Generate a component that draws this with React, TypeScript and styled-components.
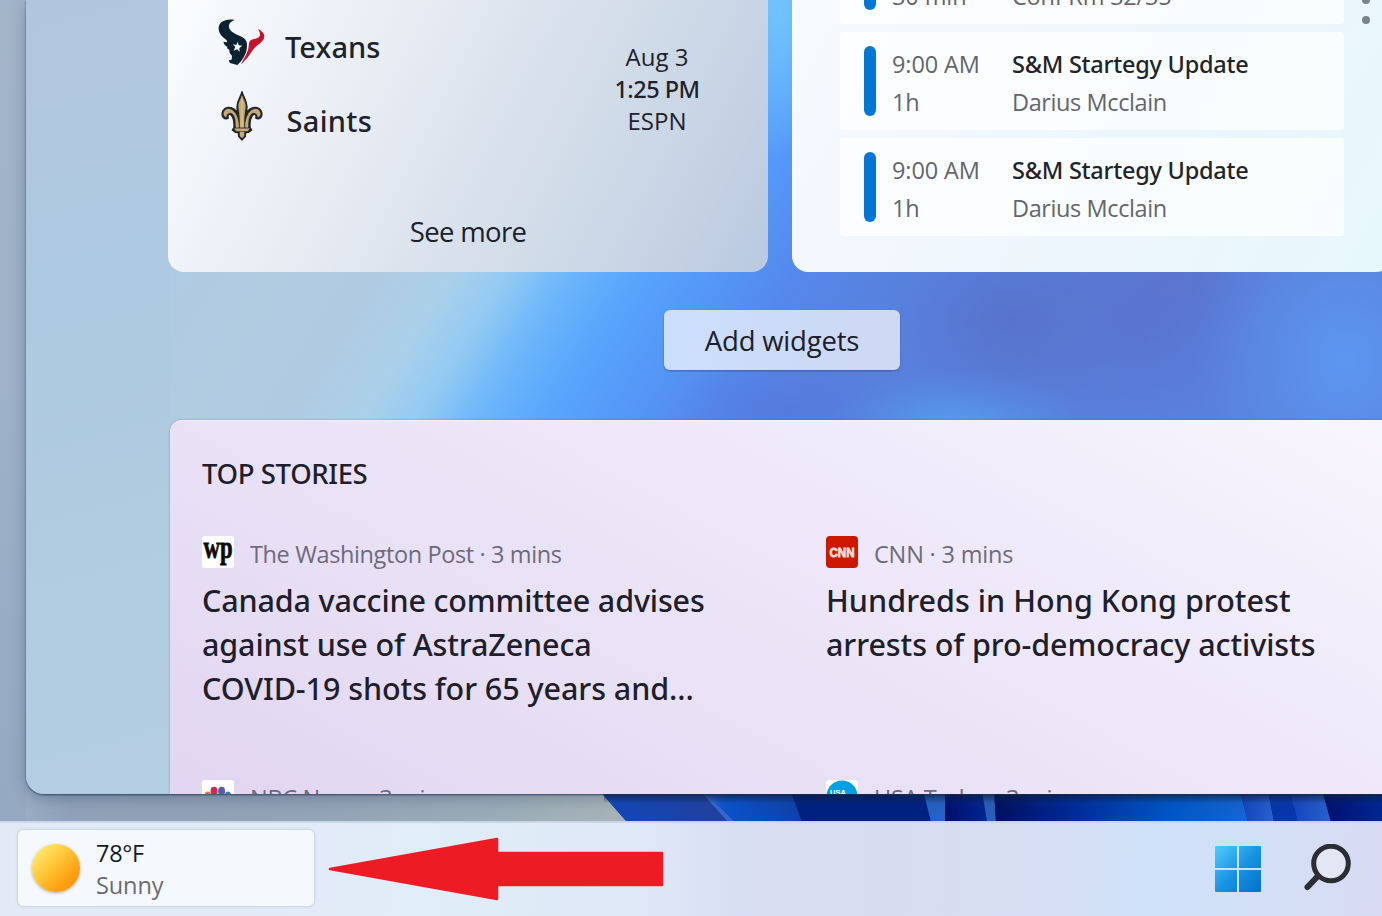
import React from 'react';
import styled, { createGlobalStyle, css } from 'styled-components';

const GlobalStyle = createGlobalStyle`
  *, *::before, *::after { box-sizing: border-box; }
  body { margin: 0; overflow: hidden; }
  p, h2, h3 { margin: 0; font-weight: inherit; }
`;

const regular = css`
  font-family: 'Open Sans', 'Noto Sans', sans-serif;
  font-weight: 400;
`;

const semibold = css`
  font-family: 'Noto Sans', 'Open Sans', sans-serif;
  font-weight: 500;
`;

type Tracked = { $track?: number };
const tracking = css<Tracked>`
  letter-spacing: ${({ $track = 0 }) => $track}px;
`;

/* ---------- desktop ---------- */

const Desktop = styled.div`
  position: relative;
  width: 1382px;
  height: 916px;
  overflow: hidden;
  display: grid;
  grid-template-columns: 1382px;
  grid-template-rows: 821px 95px;
  background: linear-gradient(90deg, #9fb3c9 0%, #8fa1b8 5%, #92a2b7 20%, #9aacb8 36%, #a6b3b8 44%);
`;

const WallpaperArt = styled.svg`
  position: absolute;
  left: 600px;
  top: 790px;
`;

const Workspace = styled.div`
  position: relative;
  padding-left: 26px;
  background: linear-gradient(180deg, #a3b5c9 0, #9db1c8 50%, #94a9c2 100%) 0 0 / 26px 100% no-repeat;
`;

/* ---------- widgets board ---------- */

const Board = styled.main`
  width: 1400px;
  height: 794px;
  padding-left: 142px;
  overflow: hidden;
  border-radius: 0 0 0 18px;
  box-shadow: 0 1px 2px rgba(30, 50, 80, 0.75), 0 4px 16px rgba(40, 60, 90, 0.35);
  background:
    linear-gradient(165deg, #b1c6de 0, #adc9e1 35%, #b0cbe0 60%, #b4cde3 100%) 0 0 / 144px 100% no-repeat,
    radial-gradient(ellipse 60px 150px at 754px 10px, rgba(116, 198, 252, 0.9), rgba(116, 198, 252, 0) 100%),
    radial-gradient(ellipse 130px 60px at 930px 430px, rgba(86, 164, 246, 0.85), rgba(86, 164, 246, 0.3) 55%, rgba(86, 164, 246, 0) 100%),
    radial-gradient(ellipse 150px 170px at 1320px 360px, rgba(92, 156, 246, 0.8), rgba(92, 152, 244, 0.4) 50%, rgba(92, 150, 240, 0) 100%),
    radial-gradient(ellipse 120px 90px at 985px 320px, rgba(88, 112, 202, 0.85), rgba(88, 112, 202, 0.35) 55%, rgba(88, 112, 202, 0) 100%),
    radial-gradient(ellipse 130px 90px at 1110px 330px, rgba(90, 110, 204, 0.6), rgba(90, 110, 204, 0) 100%),
    radial-gradient(ellipse 120px 70px at 1150px 275px, rgba(94, 106, 196, 0.45), rgba(94, 106, 196, 0) 100%),
    radial-gradient(ellipse 110px 60px at 760px 410px, rgba(84, 118, 220, 0.7), rgba(84, 118, 220, 0) 100%),
    linear-gradient(122deg, #b3c8de 0, #aecbe2 10%, #b1cbe1 22%, #b0cbe1 28%, #aad0ea 31.5%, #93caf3 34.5%, #6db7fa 37.5%, #59a6fc 41%, #5498f8 45%, #5588ec 49.5%, #5782e0 54%, #587ed8 64%, #5b84e0 100%);
`;

const BoardContent = styled.div`
  width: 1228px;
  display: flex;
  flex-direction: column;
`;

const CardRow = styled.div`
  display: flex;
  gap: 24px;
  height: 272px;
`;

const Card = styled.section`
  width: 600px;
  height: 272px;
  border-radius: 0 0 16px 16px;
  overflow: hidden;
`;

const SportsCard = styled(Card)`
  display: flex;
  flex-direction: column;
  justify-content: space-between;
  padding: 9px 0 20px;
  color: #1e222c;
  background: linear-gradient(117deg, #fafcfd 0, #f1f4f9 17%, #e6ebf3 36%, #d9e1ec 54%, #cfdae8 70%, #c5d1e3 86%, #b8c9e0 100%);
`;

const Matchup = styled.div`
  display: flex;
  justify-content: space-between;
`;

const TeamList = styled.div`
  padding-left: 49px;
`;

const Team = styled.div`
  display: flex;
  align-items: center;
  gap: 18px;
  height: 74px;
`;

const TeamLogo = styled.div`
  display: flex;
  justify-content: center;
  width: 50px;
  padding-bottom: 9px;
`;

const TeamName = styled.span<Tracked & { $indent?: number }>`
  ${semibold}
  ${tracking}
  padding-left: ${({ $indent = 0 }) => $indent}px;
  font-size: 29px;
`;

const GameInfo = styled.div`
  width: 222px;
  padding-top: 32px;
  text-align: center;
`;

const InfoLine = styled.p<Tracked & { $strong?: boolean }>`
  ${({ $strong }) => ($strong ? semibold : regular)}
  ${tracking}
  font-size: ${({ $strong }) => ($strong ? 23.5 : 24)}px;
  line-height: 32px;
`;

const SeeMore = styled.button`
  ${regular}
  align-self: center;
  border: 0;
  padding: 0;
  background: none;
  color: #1c202a;
  font-size: 27.5px;
  line-height: 40px;
  letter-spacing: -0.65px;
`;

const CalendarCard = styled(Card)`
  display: flex;
  align-items: flex-end;
  gap: 18px;
  padding: 0 0 36px 48px;
  background: linear-gradient(120deg, #f5fafe 0, #eff6fd 45%, #eaf6fc 75%, #e6f8fd 100%);
`;

const EventList = styled.div`
  display: flex;
  flex-direction: column;
  gap: 8px;
`;

const EventRow = styled.article`
  display: flex;
  gap: 16px;
  width: 504px;
  height: 98px;
  padding: 13px 24px 0;
  border-radius: 3px;
  background: rgba(255, 255, 255, 0.72);
`;

const EventMarker = styled.span`
  width: 12px;
  height: 70px;
  margin-top: 1px;
  border-radius: 6px;
  background: #0376d3;
`;

const EventTime = styled.div`
  width: 104px;
`;

const EventText = styled.p<Tracked>`
  ${regular}
  ${tracking}
  font-size: 23.5px;
  line-height: 38px;
  white-space: nowrap;
  color: #62666b;
`;

const EventTitle = styled(EventText)`
  ${semibold}
  color: #202327;
`;

const PageDots = styled.div`
  align-self: flex-start;
  display: flex;
  flex-direction: column;
  gap: 12px;
  margin-top: -4px;
`;

const PageDot = styled.span`
  width: 8px;
  height: 8px;
  border-radius: 50%;
  background: #78838a;
`;

const AddWidgets = styled.button`
  ${regular}
  align-self: center;
  width: 236px;
  height: 60px;
  margin: 38px 0 50px;
  padding: 2px 0 0;
  border: 0;
  border-radius: 6px;
  background: linear-gradient(100deg, #cbdffc 0, #ccdbf7 50%, #ced8f3 100%);
  box-shadow: 0 1px 2px rgba(40, 60, 120, 0.55);
  color: #1b202b;
  font-size: 27.5px;
  line-height: 40px;
  letter-spacing: -0.2px;
`;

/* ---------- top stories ---------- */

const Stories = styled.section`
  width: 1240px;
  height: 440px;
  margin-left: 2px;
  padding: 34px 0 0 32px;
  border-radius: 12px 0 0 0;
  background: linear-gradient(28deg, #e0d3f1 0, #e5dbf3 22%, #e9e2f6 42%, #ede7f9 60%, #f2eefb 80%, #f8f6fe 100%);
  box-shadow: inset 0 1px 1px rgba(255, 255, 255, 0.5), 0 0 2px rgba(60, 80, 130, 0.5);
`;

const StoriesHeading = styled.h2`
  ${semibold}
  font-size: 27.5px;
  line-height: 40px;
  letter-spacing: -0.38px;
  color: #211e2c;
`;

const StoryGrid = styled.div`
  display: grid;
  grid-template-columns: 624px 560px;
  row-gap: 70px;
  margin-top: 42px;
`;

const StorySource = styled.div`
  display: flex;
  gap: 16px;
  height: 32px;
`;

const SourceName = styled.span<Tracked>`
  ${regular}
  ${tracking}
  font-size: 23.5px;
  line-height: 36px;
  white-space: nowrap;
  color: #6f6a7b;
`;

const Headline = styled.h3`
  margin-top: 10px;
`;

const HeadlineLine = styled.span<Tracked>`
  ${semibold}
  ${tracking}
  display: block;
  font-size: 30.5px;
  line-height: 44px;
  white-space: nowrap;
  color: #211e2c;
`;

/* ---------- taskbar ---------- */

const Taskbar = styled.footer`
  position: relative;
  display: flex;
  align-items: flex-start;
  justify-content: space-between;
  padding: 9px 30px 0 18px;
  border-top: 2px solid rgba(200, 212, 228, 0.9);
  background: linear-gradient(92deg, #e3eaf6 0, #e3eaf7 20%, #e0edf8 32%, #dfe8f7 46%, #d8def3 54%, #d8dcf0 64%, #d6def3 76%, #cfe2fa 83%, #d2e0f7 90%, #d8dbf2 100%);
`;

const WeatherButton = styled.div`
  display: flex;
  gap: 16px;
  width: 296px;
  height: 76px;
  margin-top: -2px;
  padding: 7px 14px 0;
  border-radius: 5px;
  background: #f5f8fd;
  box-shadow: 0 0 2px 1px rgba(175, 185, 208, 0.5);
`;

const Sun = styled.span`
  width: 48px;
  height: 48px;
  margin-top: 7px;
  border-radius: 50%;
  background: linear-gradient(135deg, #ffec78 8%, #ffc83a 42%, #fd9f10 75%, #f98c08 100%);
  box-shadow: 0 1px 3px rgba(120, 90, 50, 0.5);
`;

const Temperature = styled.p`
  ${regular}
  font-size: 23.5px;
  line-height: 32px;
  letter-spacing: -0.3px;
  color: #16181c;
`;

const Condition = styled(Temperature)`
  letter-spacing: -0.1px;
  color: #686b72;
`;

const TaskbarIcons = styled.div`
  display: flex;
  gap: 42px;
  padding-top: 12px;
`;

const Pointer = styled.svg`
  position: absolute;
  left: 326px;
  top: 836px;
`;

/* ---------- logos ---------- */

const TexansLogo = () => (
  <svg width="50" height="52" viewBox="171 45 150 156">
    <path
      d="M224 57C202 52 178 60 176 79C175 95 184 106 195 113C200 117 202 120 201 124L190 122C192 130 196 134 202 137L201 142L208 146C207 154 211 159 216 164L215 176L206 178L210 186L232 192C247 180 260 160 261 136C262 124 258 115 250 110C238 103 220 99 211 87C202 75 208 62 224 57Z"
      fill="#0b2233"
    />
    <path
      d="M294 84C306 90 314 99 313 107C311 121 296 129 287 137C275 149 263 175 242 190C254 170 264 152 266 137C267 126 267 119 275 116C286 113 300 111 300 101C300 95 297 89 294 84Z"
      fill="#c4152f"
    />
    <path d="M233 122L236 133L247 134L238 141L239 152L231 145L221 149L226 138L219 130L229 132Z" fill="#fff" />
  </svg>
);

const SaintsLogo = () => (
  <svg width="44" height="54" viewBox="180 268 132 162">
    <g strokeLinejoin="round">
      <path
        d="M246 276C250 292 261 303 261 321C261 330 259 336 258 342C264 330 274 322 288 323C301 325 308 337 305 349C302 357 294 360 287 355C291 346 284 341 278 347C272 354 270 364 270 375L270 383L275 391L266 398L257 399L256 410L246 421L236 410L235 399L226 398L217 391L222 383L222 375C222 364 220 354 214 347C208 341 201 346 205 355C198 360 190 357 187 349C184 337 191 325 204 323C218 322 228 330 234 342C233 336 231 330 231 321C231 303 242 292 246 276Z"
        fill="#20232a"
        stroke="#20232a"
        strokeWidth="4"
      />
      <path
        d="M246 288C250 301 257 308 256 321C255 334 252 346 252 362L252 383L240 383L240 362C240 346 237 334 236 321C235 308 242 301 246 288Z M256 383C256 354 268 328 287 328C298 329 302 338 300 346C299 350 296 352 293 351C293 340 280 335 273 343C265 352 264 364 264 383Z M236 383C236 354 224 328 205 328C194 329 190 338 192 346C193 350 196 352 199 351C199 340 212 335 219 343C227 352 228 364 228 383Z M224 387H268L263 394H229Z M240 397H252V409L246 415L240 409Z"
        fill="#c6a871"
        stroke="#cfb680"
        strokeWidth="1.5"
      />
      <path d="M246 298V380" stroke="#e2cd9c" strokeWidth="3" />
    </g>
  </svg>
);

const PostLogo = () => (
  <svg width="32" height="32" viewBox="0 0 32 32">
    <rect width="32" height="32" rx="3" fill="#fff" />
    <text x="1.5" y="21.5" textLength="29" lengthAdjust="spacingAndGlyphs" fontFamily="Liberation Serif, serif" fontWeight="700" fontSize="31" fill="#0b0b0b" stroke="#0b0b0b" strokeWidth="0.8">
      wp
    </text>
  </svg>
);

const CnnLogo = () => (
  <svg width="32" height="32" viewBox="0 0 32 32">
    <rect width="32" height="32" rx="4" fill="#cc1800" />
    <text x="3.5" y="20.5" textLength="25" lengthAdjust="spacingAndGlyphs" fontFamily="Liberation Sans, sans-serif" fontWeight="700" fontSize="13" fill="#fbdcd6" stroke="#fbdcd6" strokeWidth="0.9">
      CNN
    </text>
  </svg>
);

const NbcLogo = () => (
  <svg width="32" height="32" viewBox="0 0 32 32">
    <rect width="32" height="32" rx="3" fill="#fff" />
    <ellipse cx="5.8" cy="15" rx="3" ry="3.4" fill="#e2762e" />
    <ellipse cx="12" cy="11.2" rx="3.5" ry="4.4" fill="#cf2a55" />
    <ellipse cx="19.6" cy="11.2" rx="3.5" ry="4.4" fill="#6257ae" />
    <ellipse cx="26" cy="15" rx="3" ry="3.4" fill="#2f83c8" />
  </svg>
);

const UsaTodayLogo = () => (
  <svg width="32" height="32" viewBox="0 0 32 32">
    <rect width="32" height="32" rx="3" fill="#fff" />
    <circle cx="16" cy="16" r="15.5" fill="#069fdf" />
    <text x="4" y="15" fontFamily="Liberation Sans, sans-serif" fontWeight="700" fontSize="7.5" fill="#fff">
      USA
    </text>
  </svg>
);

const BloomWallpaper = () => (
  <WallpaperArt width="782" height="32" viewBox="600 790 782 32">
    <defs>
      <linearGradient id="petalA"><stop offset="0" stopColor="#1148bd" /><stop offset="1" stopColor="#24409c" /></linearGradient>
      <linearGradient id="petalB"><stop offset="0" stopColor="#2f6cd6" /><stop offset="0.25" stopColor="#0b52cc" /><stop offset="1" stopColor="#1041aa" /></linearGradient>
      <linearGradient id="petalC"><stop offset="0" stopColor="#00105c" /><stop offset="0.3" stopColor="#002a98" /><stop offset="0.7" stopColor="#0057c8" /><stop offset="1" stopColor="#1467d4" /></linearGradient>
      <linearGradient id="petalD"><stop offset="0" stopColor="#1243bb" /><stop offset="1" stopColor="#2a62d0" /></linearGradient>
      <linearGradient id="petalE"><stop offset="0" stopColor="#000f6c" /><stop offset="1" stopColor="#002794" /></linearGradient>
      <linearGradient id="edge" x2="0" y2="1"><stop offset="0" stopColor="#041233" stopOpacity="0.6" /><stop offset="1" stopColor="#041233" stopOpacity="0" /></linearGradient>
    </defs>
    <path d="M599 790L627 822H1382V790Z" fill="#00207f" />
    <path d="M599 790L627 822H735L702 790Z" fill="url(#petalA)" />
    <path d="M702 790L735 822H802L790 790Z" fill="url(#petalB)" />
    <path d="M702 790L735 822H728L703 794Z" fill="#3f7be0" opacity="0.7" />
    <path d="M923 790L931 822H945V790Z" fill="#2563c4" />
    <path d="M945 790H984L988 822H945Z" fill="url(#petalE)" />
    <path d="M982 790L987 822H996L994 790Z" fill="#2a5eb8" />
    <path d="M994 790L996 822H1248L1240 790Z" fill="url(#petalC)" />
    <path d="M1240 790L1248 822H1274L1268 790Z" fill="url(#petalD)" />
    <path d="M1268 790L1274 822H1298L1289 790Z" fill="#0737ac" />
    <path d="M1289 790L1298 822H1331L1322 790Z" fill="url(#petalD)" />
    <path d="M1322 790L1331 822H1382V790Z" fill="url(#petalE)" />
    <rect x="604" y="794" width="778" height="9" fill="url(#edge)" />
  </WallpaperArt>
);

const StartIcon = () => (
  <svg width="46" height="50" viewBox="0 -2 46 50">
    <defs>
      <linearGradient id="start" gradientUnits="userSpaceOnUse" x1="0" y1="0" x2="46" y2="46">
        <stop offset="0" stopColor="#50cdfb" />
        <stop offset="0.5" stopColor="#1a94e2" />
        <stop offset="1" stopColor="#0270cc" />
      </linearGradient>
    </defs>
    <path d="M1 0H22V22H0V1Q0 0 1 0ZM24 0H45Q46 0 46 1V22H24ZM0 24H22V46H1Q0 46 0 45ZM24 24H46V45Q46 46 45 46H24Z" fill="url(#start)" />
  </svg>
);

const SearchIcon = () => (
  <svg width="49" height="50" viewBox="0 0 49 50">
    <path d="M15.5 31.5L4.5 43" stroke="#2b2d33" strokeWidth="6" strokeLinecap="round" />
    <circle cx="28" cy="19.5" r="17.3" fill="#e2e6f5" stroke="#2b2d33" strokeWidth="5" />
  </svg>
);

/* ---------- data ---------- */

const events = [
  { time: '8:30 AM', length: '30 min', title: 'Shiproom', detail: 'Conf Rm 32/35', track: -0.2 },
  { time: '9:00 AM', length: '1h', title: 'S&M Startegy Update', detail: 'Darius Mcclain', track: -0.4 },
  { time: '9:00 AM', length: '1h', title: 'S&M Startegy Update', detail: 'Darius Mcclain', track: -0.4 },
];

type Line = [text: string, track: number];
const stories: { Logo: () => React.JSX.Element; source: string; track: number; lines: Line[] }[] = [
  {
    Logo: PostLogo,
    source: 'The Washington Post · 3 mins',
    track: -0.38,
    lines: [
      ['Canada vaccine committee advises', -0.16],
      ['against use of AstraZeneca', -0.12],
      ['COVID-19 shots for 65 years and...', -0.07],
    ],
  },
  {
    Logo: CnnLogo,
    source: 'CNN · 3 mins',
    track: -0.18,
    lines: [
      ['Hundreds in Hong Kong protest', 0.04],
      ['arrests of pro-democracy activists', -0.08],
    ],
  },
  { Logo: NbcLogo, source: 'NBC News · 3 mins', track: -0.3, lines: [] },
  { Logo: UsaTodayLogo, source: 'USA Today · 3 mins', track: -0.3, lines: [] },
];

export default function App() {
  return (
    <Desktop>
      <GlobalStyle />
      <BloomWallpaper />
      <Workspace>
        <Board>
          <BoardContent>
            <CardRow>
              <SportsCard>
                <Matchup>
                  <TeamList>
                    <Team>
                      <TeamLogo><TexansLogo /></TeamLogo>
                      <TeamName $track={0.1}>Texans</TeamName>
                    </Team>
                    <Team>
                      <TeamLogo><SaintsLogo /></TeamLogo>
                      <TeamName $track={0.3} $indent={1.5}>Saints</TeamName>
                    </Team>
                  </TeamList>
                  <GameInfo>
                    <InfoLine>Aug 3</InfoLine>
                    <InfoLine $strong $track={-0.5}>1:25 PM</InfoLine>
                    <InfoLine>ESPN</InfoLine>
                  </GameInfo>
                </Matchup>
                <SeeMore>See more</SeeMore>
              </SportsCard>
              <CalendarCard>
                <EventList>
                  {events.map((event, i) => (
                    <EventRow key={i}>
                      <EventMarker />
                      <EventTime>
                        <EventText $track={-0.1}>{event.time}</EventText>
                        <EventText $track={-0.1}>{event.length}</EventText>
                      </EventTime>
                      <div>
                        <EventTitle $track={-0.25}>{event.title}</EventTitle>
                        <EventText $track={event.track}>{event.detail}</EventText>
                      </div>
                    </EventRow>
                  ))}
                </EventList>
                <PageDots>
                  <PageDot />
                  <PageDot />
                </PageDots>
              </CalendarCard>
            </CardRow>
            <AddWidgets>Add widgets</AddWidgets>
            <Stories>
              <StoriesHeading>TOP STORIES</StoriesHeading>
              <StoryGrid>
                {stories.map(({ Logo, source, track, lines }) => (
                  <article key={source}>
                    <StorySource>
                      <Logo />
                      <SourceName $track={track}>{source}</SourceName>
                    </StorySource>
                    <Headline>
                      {lines.map(([text, lineTrack]) => (
                        <HeadlineLine key={text} $track={lineTrack}>{text}</HeadlineLine>
                      ))}
                    </Headline>
                  </article>
                ))}
              </StoryGrid>
            </Stories>
          </BoardContent>
        </Board>
      </Workspace>
      <Taskbar>
        <WeatherButton>
          <Sun />
          <div>
            <Temperature>78°F</Temperature>
            <Condition>Sunny</Condition>
          </div>
        </WeatherButton>
        <TaskbarIcons>
          <StartIcon />
          <SearchIcon />
        </TaskbarIcons>
      </Taskbar>
      <Pointer width="340" height="66" viewBox="326 836 340 66">
        <path d="M330 869L497 839V853H662V885H497V899Z" fill="#ed1c24" stroke="#ed1c24" strokeWidth="2.5" strokeLinejoin="round" />
      </Pointer>
    </Desktop>
  );
}
